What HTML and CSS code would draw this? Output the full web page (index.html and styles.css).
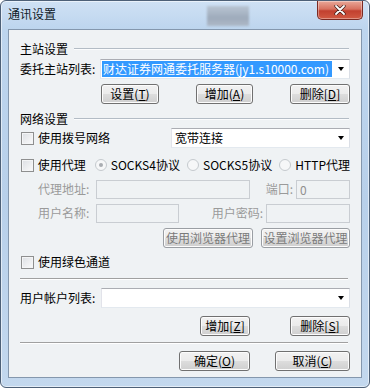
FILE: index.html
```html
<!DOCTYPE html>
<html lang="zh-CN">
<head>
    <meta charset="UTF-8">
    <title>通讯设置</title>
    <link rel="stylesheet" href="styles.css">
</head>
<body>
<div class="window">
    <!-- title bar -->
    <div class="titlebar">
        <span class="title">通讯设置</span>
        <span class="redacted"></span>
        <button class="close">
            <svg width="14" height="10" viewBox="0 0 14 10">
                <path d="M3 1 L11 9 M11 1 L3 9" stroke="#3a1a16" stroke-width="3.2" stroke-linecap="round"/>
                <path d="M3 1 L11 9 M11 1 L3 9" stroke="#fff" stroke-width="1.8" stroke-linecap="round"/>
            </svg>
        </button>
    </div>

    <div class="client">
        <!-- 主站设置 -->
        <div class="group-head"><span>主站设置</span><i class="rule"></i></div>
        <div class="row r-host">
            <span class="label w-host">委托主站列表:</span>
            <div class="combo grow">
                <span class="sel">财达证券网通委托服务器(jy1.s10000.com)</span>
                <span class="arrow"></span>
            </div>
        </div>
        <div class="row r-host-btns">
            <button class="btn b-set">设置(<u>T</u>)</button>
            <button class="btn b-add">增加(<u>A</u>)</button>
            <button class="btn b-del">删除[<u>D</u>]</button>
        </div>

        <!-- 网络设置 -->
        <div class="group-head r-net"><span>网络设置</span><i class="rule"></i></div>
        <div class="row r-dial">
            <span class="check"></span>
            <span class="check-text">使用拨号网络</span>
            <div class="combo c-dial">
                <span class="val">宽带连接</span>
                <span class="arrow"></span>
            </div>
        </div>
        <div class="row r-proxy">
            <span class="check"></span>
            <span class="check-text w-proxy">使用代理</span>
            <span class="opt o1"><span class="radio on"></span>SOCKS4协议</span>
            <span class="opt o2"><span class="radio"></span>SOCKS5协议</span>
            <span class="opt"><span class="radio"></span>HTTP代理</span>
        </div>
        <div class="row r-addr indent">
            <span class="label dim w-lab">代理地址:</span>
            <span class="field f-addr"></span>
            <span class="label dim right w-port">端口:</span>
            <span class="field f-port">0</span>
        </div>
        <div class="row r-user indent">
            <span class="label dim w-lab">用户名称:</span>
            <span class="field f-user"></span>
            <span class="label dim right w-pwd">用户密码:</span>
            <span class="field f-pwd"></span>
        </div>
        <div class="row r-browser end">
            <button class="btn off b-use">使用浏览器代理</button>
            <button class="btn off b-conf">设置浏览器代理</button>
        </div>
        <div class="row r-green">
            <span class="check"></span>
            <span class="check-text">使用绿色通道</span>
        </div>

        <div class="sep s1"></div>

        <!-- 用户帐户 -->
        <div class="row r-acc">
            <span class="label w-acc">用户帐户列表:</span>
            <div class="combo grow">
                <span class="val"></span>
                <span class="arrow"></span>
            </div>
        </div>
        <div class="row r-acc-btns end">
            <button class="btn b-zadd">增加[<u>Z</u>]</button>
            <button class="btn b-sdel">删除[<u>S</u>]</button>
        </div>

        <div class="sep s2"></div>

        <div class="row r-ok end">
            <button class="btn b-ok">确定(<u>O</u>)</button>
            <button class="btn b-cancel">取消(<u>C</u>)</button>
        </div>
    </div>
</div>
</body>
</html>
```

FILE: styles.css
```css
/* base */
*{
    box-sizing: border-box;
    margin: 0;
    padding: 0;
}
body{
    background: #fff;
    font-family: "Noto Sans CJK SC", "Noto Sans", sans-serif;
    font-size: 12px;
    line-height: 16px;
    color: #000;
}

/* window frame */
.window{
    width: 370px;
    height: 388px;
    border: 1px solid #4d6077;
    border-radius: 6px;
    background: linear-gradient(to bottom, #cfe1f4 0px, #bdd5ee 28px, #b8d0ea 200px, #c3d8ee 388px);
    box-shadow: inset 0 0 0 1px rgba(255,255,255,0.55);
    display: flex;
    flex-direction: column;
}

.titlebar{
    height: 28px;
    display: flex;
    align-items: flex-start;
}
.title{
    padding: 5px 0 0 7px;
    color: #101a28;
}
.redacted{
    width: 42px;
    height: 20px;
    margin: 5px 0 0 151px;
    background: linear-gradient(to bottom, #b9c5d3, #9eabbb 60%, #aeb9c7);
    filter: blur(1px);
}
.close{
    margin-left: auto;
    margin-right: 6px;
    width: 46px;
    height: 19px;
    border: 1px solid #7b2a22;
    border-top: none;
    border-radius: 0 0 5px 5px;
    background: linear-gradient(to bottom, #e9a899 0%, #d7715f 45%, #c2402f 55%, #d15a43 100%);
    box-shadow: inset 0 0 0 1px rgba(255,255,255,0.35);
    display: flex;
    align-items: center;
    justify-content: center;
}

/* client area */
.client{
    margin: 0 7px 9px 7px;
    height: 349px;
    border: 1px solid #8497ad;
    background: #eff2f4;
    padding: 11px 11px 0 11px;
    display: flex;
    flex-direction: column;
}

.row{
    display: flex;
    align-items: center;
    height: 20px;
}
.end{ justify-content: flex-end; }
.indent{ padding-left: 18px; }

.group-head{
    display: flex;
    align-items: center;
    height: 16px;
}
.rule{
    flex: 1;
    margin-left: 6px;
    margin-right: 1px;
    border-top: 1px solid #b3bcc5;
    border-bottom: 1px solid #fbfcfd;
}

.label{ white-space: nowrap; }
.dim{ color: #9a9a9a; }
.right{ text-align: right; padding-right: 3px; }
.w-host{ width: 80px; }
.w-acc{ width: 81px; }
.w-lab{ width: 58px; }
.w-port{ width: 46px; }
.w-pwd{ width: 87px; }
.grow{ flex: 1; }

/* combobox */
.combo{
    height: 20px;
    border: 1px solid #abadb3;
    border-color: #abadb3 #dbdfe6 #e3e9ef #e2e3ea;
    background: #fff;
    display: flex;
    align-items: center;
    padding-left: 1px;
}
.sel{
    flex: 1;
    height: 16px;
    background: #3399ff;
    color: #fff;
    white-space: nowrap;
    overflow: hidden;
    padding-left: 1px;
}
.val{
    flex: 1;
    padding-left: 2px;
    white-space: nowrap;
}
.arrow{
    width: 17px;
    height: 18px;
    display: flex;
    align-items: center;
    justify-content: center;
}
.arrow::after{
    content: "";
    border-top: 4px solid #000;
    border-left: 3.5px solid transparent;
    border-right: 3.5px solid transparent;
}
.c-dial{
    width: 179px;
    margin-left: auto;
}

/* checkbox + radio */
.check{
    width: 13px;
    height: 13px;
    margin-left: 1px;
    border: 1px solid #8e8f8f;
    background: linear-gradient(135deg, #dcdfe3, #fbfbfb);
    box-shadow: inset 0 0 0 1px #f4f5f6;
}
.check-text{
    margin-left: 4px;
    white-space: nowrap;
}
.w-proxy{ width: 58px; }
.opt{
    display: flex;
    align-items: center;
    white-space: nowrap;
}
.o1, .o2{ width: 94px; }
.radio{
    width: 12px;
    height: 12px;
    border: 1px solid #c5cace;
    border-radius: 50%;
    background: #f6f7f8;
    margin-right: 4px;
    display: flex;
    align-items: center;
    justify-content: center;
}
.radio.on::after{
    content: "";
    width: 4px;
    height: 4px;
    border-radius: 50%;
    background: #a9adb2;
}

/* disabled text fields */
.field{
    height: 19px;
    border: 1px solid #c9cdd2;
    background: #eff2f4;
    color: #8f8f8f;
    padding-left: 3px;
    line-height: 17px;
}
.f-addr{ width: 154px; }
.f-port{ width: 54px; }
.f-user{ width: 83px; }
.f-pwd{ width: 84px; }

/* push buttons */
.btn{
    height: 20px;
    font: inherit;
    color: #000;
    border: 1px solid #707070;
    border-radius: 3px;
    background: linear-gradient(to bottom, #f2f2f2 0%, #ebebeb 50%, #dddddd 51%, #cfcfcf 100%);
    box-shadow: inset 0 0 0 1px #fcfcfc;
    white-space: nowrap;
}
.btn u{ text-decoration: underline; }
.btn.off{
    color: #7a7a7a;
    border-color: #9a9ea3;
}

.r-host{ margin-top: 2px; }
.r-host-btns{
    margin-top: 5px;
    padding-left: 81px;
    justify-content: space-between;
}
.b-set{ width: 58px; }
.b-add{ width: 57px; }
.b-del{ width: 60px; }

.r-net{ margin-top: 7px; }
.r-dial{ margin-top: 1px; }
.r-proxy{ margin-top: 9px; height: 16px; }
.r-addr{ margin-top: 6px; }
.r-user{ margin-top: 4px; }
.r-browser{ margin-top: 5px; gap: 8px; }
.b-use{ width: 90px; }
.b-conf{ width: 89px; }
.r-green{ margin-top: 6px; height: 16px; }

.sep{
    height: 2px;
    border-top: 1px solid #a0a0a0;
    border-bottom: 1px solid #fff;
    margin-right: 2px;
}
.s1{ margin-top: 8px; }
.r-acc{ margin-top: 8px; }
.r-acc-btns{ margin-top: 8px; gap: 40px; }
.b-zadd{ width: 50px; }
.b-sdel{ width: 60px; }
.s2{ margin-top: 6px; }
.r-ok{ margin-top: 7px; gap: 25px; }
.b-ok{ width: 71px; }
.b-cancel{ width: 75px; }
```
